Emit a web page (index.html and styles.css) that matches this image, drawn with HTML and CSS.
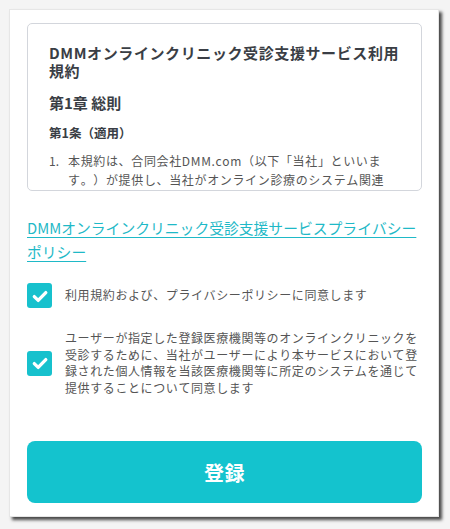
FILE: index.html
```html
<!DOCTYPE html>
<html lang="ja">
<head>
<meta charset="utf-8">
<title>登録</title>
<link rel="stylesheet" href="styles.css">
</head>
<body>
<div class="card">
  <div class="terms">
    <h1 class="terms-title">DMMオンラインクリニック受診支援サービス利用規約</h1>
    <h2 class="chapter">第1章 総則</h2>
    <h3 class="article">第1条（適用）</h3>
    <ol class="clauses">
      <li class="clause"><span class="num">1.</span><span class="clause-text">本規約は、合同会社DMM.com（以下「当社」といいます。）が提供し、当社がオンライン診療のシステム関連サービスを提供する医療機関等において利用される受診支援サービスに適用されます。</span></li>
    </ol>
  </div>
  <a class="policy-link" href="#">DMMオンラインクリニック受診支援サービスプライバシーポリシー</a>
  <label class="agree agree-first">
    <span class="box"><svg viewBox="0 0 24 24" width="24" height="24"><path d="M6.3 12.6l3.9 3.8 7.6-7.8" fill="none" stroke="#fff" stroke-width="3.3" stroke-linecap="round" stroke-linejoin="round"/></svg></span>
    <span class="agree-text">利用規約および、プライバシーポリシーに同意します</span>
  </label>
  <label class="agree agree-second">
    <span class="box"><svg viewBox="0 0 24 24" width="24" height="24"><path d="M6.3 12.6l3.9 3.8 7.6-7.8" fill="none" stroke="#fff" stroke-width="3.3" stroke-linecap="round" stroke-linejoin="round"/></svg></span>
    <span class="agree-text">ユーザーが指定した登録医療機関等のオンラインクリニックを受診するために、当社がユーザーにより本サービスにおいて登録された個人情報を当該医療機関等に所定のシステムを通じて提供することについて同意します</span>
  </label>
  <button class="submit" type="button">登録</button>
</div>
</body>
</html>
```

FILE: styles.css
```css
* { box-sizing: border-box; }
html, body { margin: 0; padding: 0; }
body {
  background: #f4f4f4;
  padding: 9px;
  font-family: "Noto Sans CJK JP", "Noto Sans", sans-serif;
  color: #555;
  text-spacing-trim: space-all;
  font-kerning: none;
}
.card {
  width: 430px;
  height: 508px;
  background: #fff;
  border: 1px solid #e6e6e6;
  box-shadow: 3px 3px 3px rgba(0,0,0,0.7);
  padding: 13px 16px 13px 17px;
  display: flex;
  flex-direction: column;
}
.terms {
  height: 168px;
  border: 1px solid #d3d6dc;
  border-radius: 5px;
  overflow: hidden;
  padding: 20px 20px 0 21px;
  flex-shrink: 0;
}
.terms-title {
  margin: 0;
  font-size: 15px;
  line-height: 18px;
  font-weight: 700;
  color: #3a3e45;
  letter-spacing: 0.04em;
}
.chapter {
  margin: 13px 0 0;
  font-size: 15px;
  line-height: 20px;
  font-weight: 700;
  color: #3a3e45;
}
.article {
  margin: 11px 0 0;
  font-size: 12.5px;
  line-height: 18px;
  font-weight: 700;
  color: #3a3e45;
}
.clauses {
  margin: 9px 0 0;
  padding: 0;
  list-style: none;
  color: #555;
}
.clause {
  display: flex;
  font-size: 12px;
  line-height: 19px;
}
.num {
  flex: 0 0 19px;
}
.clause-text {
  flex: 1 1 auto;
  min-width: 0;
  margin-right: 10px;
  font-size: 12px;
  letter-spacing: 0.65px;
}
.policy-link {
  margin-top: 25px;
  font-size: 14.8px;
  line-height: 24px;
  color: #1fb9c7;
  text-decoration: underline;
  text-underline-offset: 3px;
}
.agree {
  display: flex;
  align-items: center;
  gap: 13px;
}
.agree-first { margin-top: 19px; }
.agree-second { margin-top: 22px; }
.box {
  flex: 0 0 25px;
  width: 25px;
  height: 25px;
  border-radius: 3px;
  background: #17c1cd;
  display: flex;
  align-items: center;
  justify-content: center;
}
.agree-text {
  font-size: 12px;
  line-height: 16.7px;
  letter-spacing: 0.6px;
  color: #555;
}
.submit {
  margin-top: auto;
  height: 62px;
  border: 0;
  border-radius: 8px;
  background: #14c3ce;
  color: #fff;
  font-family: inherit;
  font-size: 20px;
  font-weight: 700;
  letter-spacing: 0.03em;
}
```
